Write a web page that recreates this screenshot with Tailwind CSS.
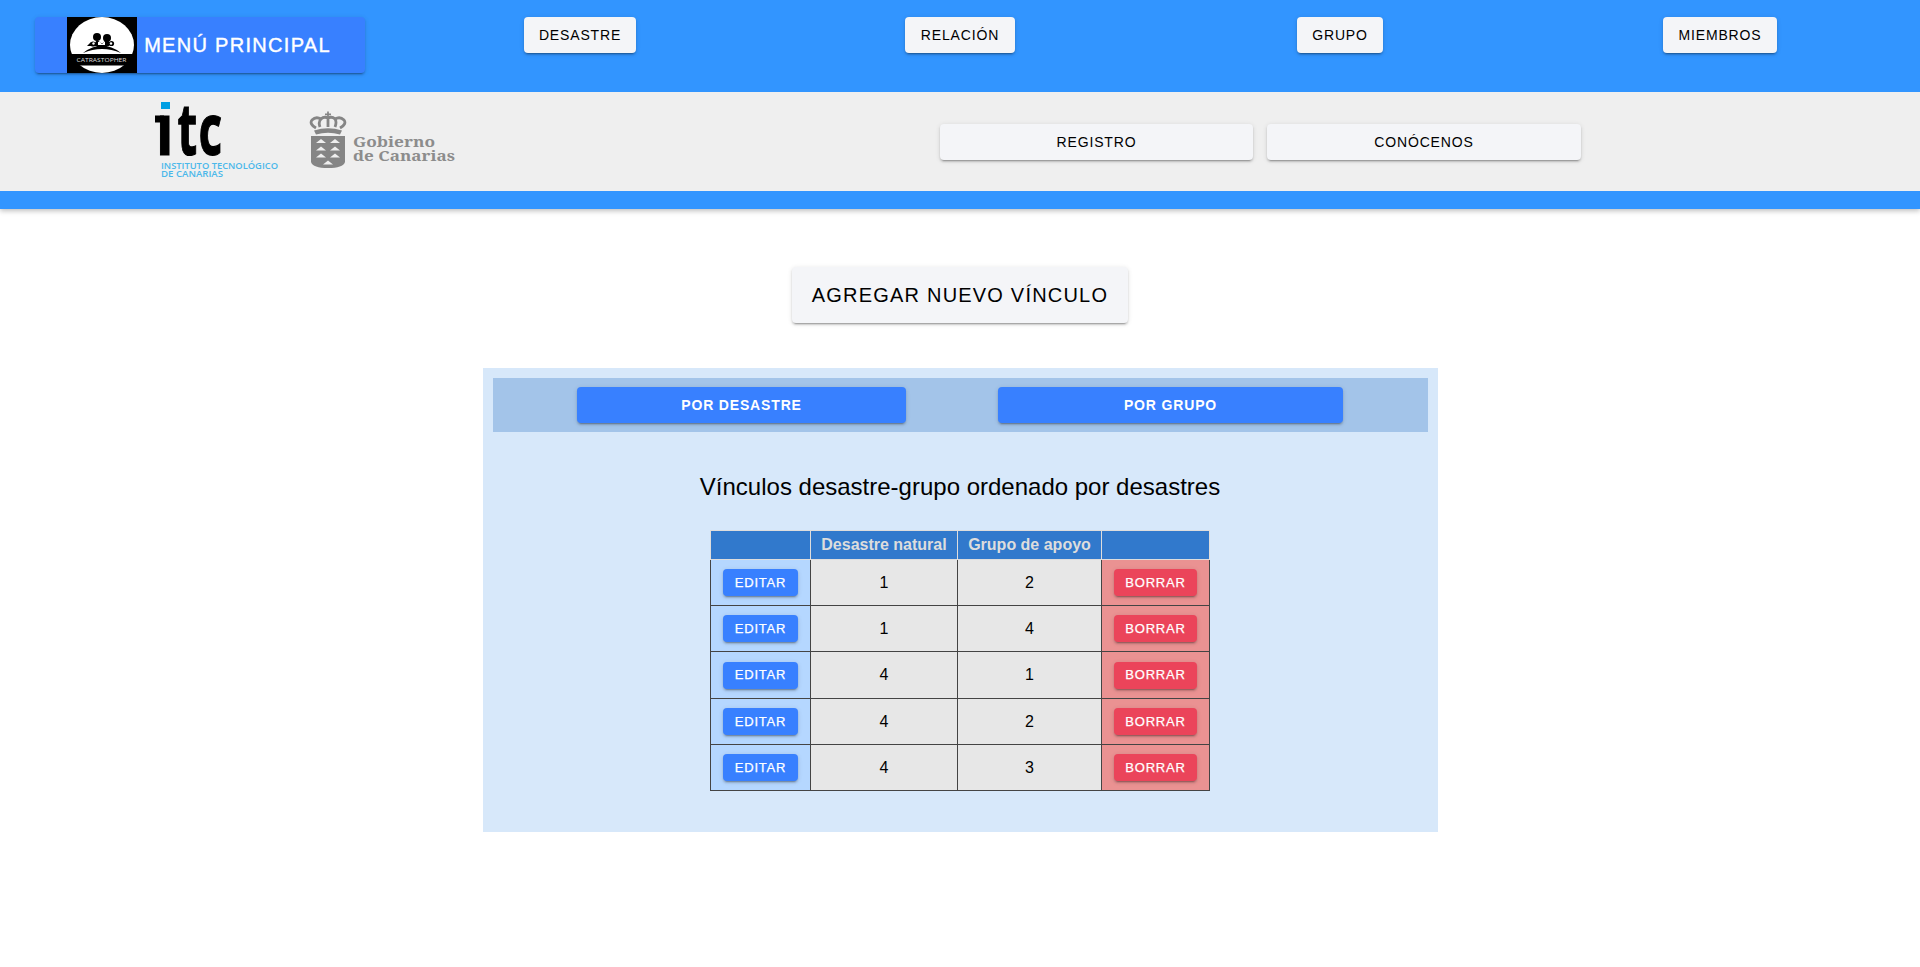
<!DOCTYPE html>
<html lang="es">
<head>
<meta charset="utf-8">
<title>Vínculos</title>
<script src="https://cdn.jsdelivr.net/npm/@tailwindcss/browser@4"></script>
<style>
  .btn { display:flex; align-items:center; justify-content:center; flex-shrink:0; white-space:nowrap; border-radius:4px; letter-spacing:.06em; box-shadow:0 3px 1px -2px rgba(0,0,0,.2),0 2px 2px 0 rgba(0,0,0,.14),0 1px 5px 0 rgba(0,0,0,.12); }
</style>
</head>
<body class="bg-white text-black font-['Liberation_Sans',Arial,sans-serif] overflow-hidden">
<header class="h-[209px] bg-[#3295ff] shadow-[0_2px_5px_rgba(0,0,0,0.25)]">
  <nav class="h-[92px] pt-[17px] pl-[35px] flex items-start text-sm">
    <a class="btn h-14 w-[330px] bg-[#3880ff] text-white text-[20px] pr-[2px]">
      <svg class="w-[70px] h-14 mr-[7px]" viewBox="0 0 70 56">
        <rect width="70" height="56" fill="#000"/>
        <ellipse cx="35" cy="28" rx="32" ry="28" fill="#fff"/>
        <path d="M16 36Q35 21 54 36Q35 28 16 36Z" fill="#000"/>
        <circle cx="30" cy="20" r="4" fill="#000"/><circle cx="40" cy="21" r="4" fill="#000"/>
        <path d="M27 27l3-4 4 3 2 0 4-4 4 5-2 2-15 0z" fill="#000"/>
        <circle cx="26" cy="27" r="2.6" fill="#000"/><circle cx="44.500" cy="26.500" r="2.600" fill="#000"/>
        <circle cx="26.500" cy="26.500" r="1.200" fill="#fff"/><circle cx="44" cy="26.500" r="1.200" fill="#fff"/>
        <path d="M31 25h2l2 2 2-2h1v3h-7z" fill="#fff"/>
        <path d="M20 29l4-4v4z" fill="#000"/>
        <rect y="37" width="70" height="11.500" fill="#000"/>
        <text x="9.500" y="45" font-family="Open Sans,sans-serif" font-size="6" fill="#ddd" textLength="50" lengthAdjust="spacingAndGlyphs" letter-spacing="0">CATRASTOPHER</text>
      </svg>
      <span class="tracking-[0.065em] [-webkit-text-stroke:0.4px_white]">MENÚ PRINCIPAL</span>
    </a>
    <a class="btn h-9 w-[112px] ml-[159px] bg-[#f4f5f8]">DESASTRE</a>
    <a class="btn h-9 w-[110px] ml-[269px] bg-[#f4f5f8]">RELACIÓN</a>
    <a class="btn h-9 w-[86px] ml-[282px] bg-[#f4f5f8]">GRUPO</a>
    <a class="btn h-9 w-[114px] ml-[280px] bg-[#f4f5f8]">MIEMBROS</a>
  </nav>
  <div class="h-[99px] bg-[#efefef] flex items-start text-sm">
    <svg class="w-[130px] h-[78px] ml-[155px] mt-[10px] shrink-0 overflow-visible" viewBox="0 0 130 78">
      <rect x="6" y="0" width="9" height="7" fill="#009fe3"/>
      <rect x="0" y="13.500" width="9" height="7" fill="#000"/>
      <g font-family="Noto Sans,sans-serif" font-weight="700" font-size="71" stroke="#000" stroke-width="1.200">
        <text transform="translate(1.200 52.500) scale(.8 1)">ı</text>
        <text transform="translate(22.500 52.500) scale(.64 1)">t</text>
        <text transform="translate(43.500 52.500) scale(.64 1)">c</text>
      </g>
      <g font-family="Open Sans,sans-serif" font-weight="600" font-size="8.500" fill="#4bb8ea">
        <text x="6" y="67" textLength="117" lengthAdjust="spacingAndGlyphs">INSTITUTO TECNOLÓGICO</text>
        <text x="6" y="75" textLength="62" lengthAdjust="spacingAndGlyphs">DE CANARIAS</text>
      </g>
    </svg>
    <svg class="w-[150px] h-[60px] ml-[24px] mt-[19px] shrink-0" viewBox="0 0 150 60">
      <g fill="none" stroke="#858585" stroke-width="2.800">
        <path d="M19 0.500v6M16 3.300h6" stroke-width="1.700"/>
        <path d="M7 17Q0 13 3 9Q7 5 12 8Q9 11 11 16M12 8Q15 5 19 7Q23 5 26 8Q28 11 26 16M26 8Q31 5 35 9Q38 13 31 17M19 7v9"/>
      </g>
      <path d="M5 19.500Q19 15 33 19.500L31 23.500Q19 20 7 23.500Z" fill="#858585"/>
      <path d="M2 25H36V51Q34 57 19 57Q4 57 2 51Z" fill="#858585"/>
      <path d="M7 32l5-4 5 4zM21 32l5-4 5 4zM7 39.500l5-4 5 4zM21 39.500l5-4 5 4zM7 46.500l5-4 5 4zM21 46.500l5-4 5 4zM14 53.500l5-4 5 4z" fill="#efefef"/>
      <g font-family="Noto Serif,DejaVu Serif,serif" font-weight="700" font-size="13.800" fill="#8c8c8c">
        <text x="44" y="35.500" textLength="82" lengthAdjust="spacingAndGlyphs">Gobierno</text>
        <text x="44" y="49.500" textLength="102" lengthAdjust="spacingAndGlyphs">de Canarias</text>
      </g>
    </svg>
    <a class="btn h-9 w-[313px] ml-[481px] mt-8 bg-[#f4f5f8]">REGISTRO</a>
    <a class="btn h-9 w-[314px] ml-[14px] mt-8 bg-[#f4f5f8]">CONÓCENOS</a>
  </div>
</header>
<main class="flex flex-col items-center pt-[58px]">
  <a class="btn h-14 w-[336px] bg-[#f4f5f8] text-[20px] pb-px">AGREGAR NUEVO VÍNCULO</a>
  <section class="mt-[45px] w-[955px] h-[464px] bg-[#d7e8fa] p-[10px] flex flex-col items-center">
    <div class="w-full h-[54px] bg-[#a3c4e9] pt-[9px] pl-[84px] flex text-sm font-bold text-white shrink-0">
      <a class="btn h-9 w-[329px] pl-px bg-[#3880ff]">POR DESASTRE</a>
      <a class="btn h-9 w-[345px] pl-px ml-[92px] bg-[#3880ff]">POR GRUPO</a>
    </div>
    <h2 class="mt-[39px] text-[24px] leading-8">Vínculos desastre-grupo ordenado por desastres</h2>
    <table class="mt-[27px] w-[500px] table-fixed border-collapse text-center text-base">
      <colgroup><col class="w-[100px]"><col class="w-[147px]"><col class="w-[144px]"><col class="w-[108px]"></colgroup>
      <thead><tr class="h-[29px] bg-[#3179cc] text-[#ddd]">
        <th class="border border-[#ddd] p-0"></th><th class="border border-[#ddd] p-0">Desastre natural</th><th class="border border-[#ddd] p-0">Grupo de apoyo</th><th class="border border-[#ddd] p-0"></th>
      </tr></thead>
      <tbody id="rows"></tbody>
    </table>
  </section>
</main>
<script>
  const data = [[1,2],[1,4],[4,1],[4,2],[4,3]];
  document.getElementById('rows').innerHTML = data.map(([d,g],i) => `
    <tr class="${i === 2 ? 'h-[47px]' : 'h-[46px]'}">
      <td class="border border-[#444] bg-[#b5d7ff] p-0"><a class="btn mx-auto h-[27px] w-[75px] bg-[#3880ff] text-white text-[13px] [-webkit-text-stroke:0.25px_white]">EDITAR</a></td>
      <td class="border border-[#444] bg-[#e7e7e7] p-0">${d}</td>
      <td class="border border-[#444] bg-[#e7e7e7] p-0">${g}</td>
      <td class="border border-[#444] bg-[#ea9292] p-0"><a class="btn mx-auto h-[27px] w-[83px] bg-[#eb445a] text-white text-[13px] [-webkit-text-stroke:0.25px_white]">BORRAR</a></td>
    </tr>`).join('');
</script>
</body>
</html>
